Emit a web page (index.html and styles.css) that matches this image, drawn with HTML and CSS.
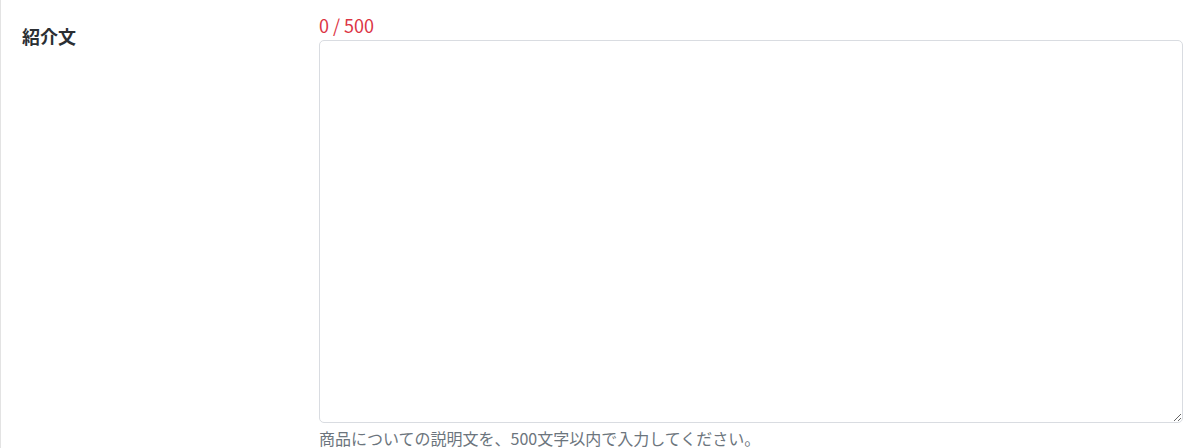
FILE: index.html
```html
<!DOCTYPE html>
<html lang="ja">
<head>
    <meta charset="UTF-8">
    <meta name="viewport" content="width=device-width, initial-scale=1.0">
    <title>紹介文</title>
    <link rel="stylesheet" href="styles.css">
</head>
<body>

    <div class="form-panel">
        <div class="form-row">
            <label class="form-label" for="intro">紹介文</label>
            <div class="form-field">
                <div class="char-count"><span id="introCount">0</span> / 500</div>
                <textarea id="intro" class="form-textarea" maxlength="500"></textarea>
                <p class="form-help">商品についての説明文を、500文字以内で入力してください。</p>
            </div>
        </div>
    </div>

    <script>
        const intro = document.getElementById('intro');
        const introCount = document.getElementById('introCount');
        intro.addEventListener('input', function () {
            introCount.textContent = intro.value.length;
        });
    </script>

</body>
</html>
```

FILE: styles.css
```css
body {
    margin: 0;
    font-family: "Noto Sans CJK JP", "Noto Sans", sans-serif;
    color: #333;
    background-color: #fff;
}
.form-panel {
    border-left: 1px solid #e3e3e3;
    padding: 13px 17px 0 21px;
    min-height: 448px;
    box-sizing: border-box;
}
.form-row {
    display: grid;
    grid-template-columns: 297px 1fr; /* Etiket | Alan */
}
.form-label {
    font-size: 18px;
    font-weight: bold;
    line-height: 24px;
    padding-top: 11px;
    color: #2b2f33;
}
.form-field {
    display: flex;
    flex-direction: column;
}
.char-count {
    font-size: 18px;
    line-height: 24px;
    color: #dc3545;
    margin-bottom: 3px;
}
.form-textarea {
    display: block;
    width: 100%;
    height: 383px;
    box-sizing: border-box;
    border: 1px solid #d9dce1;
    border-radius: 5px;
    padding: 6px 12px;
    font-family: inherit;
    font-size: 16px;
    resize: vertical;
}
.form-help {
    margin: 3px 0 0;
    font-size: 16px;
    line-height: 24px;
    color: #6c757d;
}
```
